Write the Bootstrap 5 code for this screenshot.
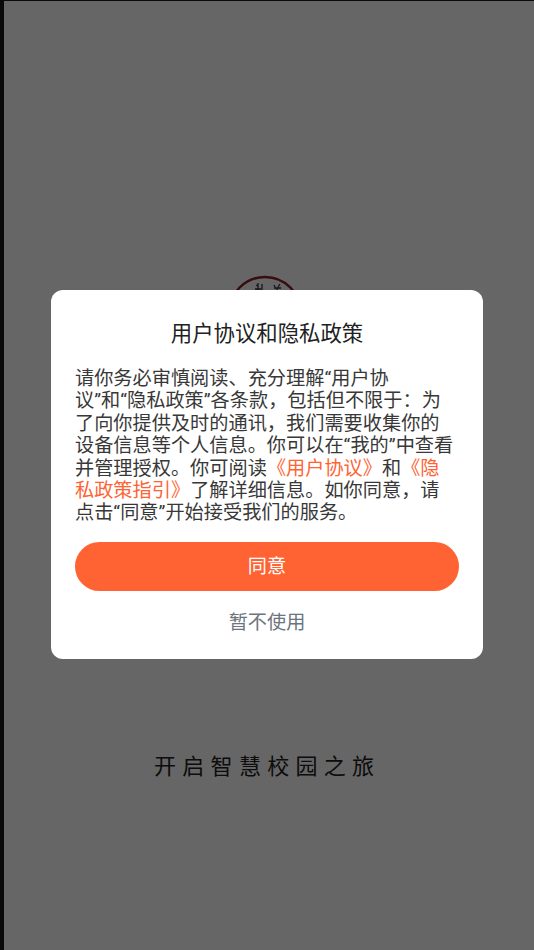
<!DOCTYPE html>
<html lang="zh-CN">
<head>
<meta charset="utf-8">
<title>用户协议和隐私政策</title>
<link rel="stylesheet" href="https://cdn.jsdelivr.net/npm/bootstrap@5.3.0/dist/css/bootstrap.min.css">
<style>
html,body{height:100%;margin:0}
body{background:#000;font-family:Roboto,"Noto Sans CJK SC",sans-serif}
.screen-frame{height:950px;padding:1px 0 0 4px;background:#0a0a0a}
.splash-area{position:relative;height:100%;background:#fff}
.logo-seal{position:absolute;left:221px;top:272px}
.slogan-text{position:absolute;left:150px;top:752px;font-size:22px;line-height:28px;letter-spacing:6.3px;color:#222;white-space:nowrap}
.scrim-layer{position:fixed;left:4px;top:1px;right:0;bottom:0;background:rgba(0,0,0,.6);padding:289px 51px 0 46.5px}
.agree-dialog{height:369px;border-radius:12px;background:#fff;padding:29px 24px 0 24.5px;border:0}
.agree-title{font-size:21.4px;line-height:30px;color:#212121;text-align:center;margin:0 0 19px;font-weight:400;white-space:nowrap}
.agree-copy{font-size:19.2px;line-height:22.4px;color:#383838;margin:0 0 17px;white-space:nowrap}
.agree-copy a{color:#ff6333;text-decoration:none}
.btn-consent{display:block;width:100%;height:49px;border-radius:24.5px;background:#ff6333;border:0;color:#fff;font-size:19.2px;line-height:49px;padding:0}
.btn-decline{display:block;width:100%;height:49px;margin-top:7px;background:none;border:0;color:#6c757d;font-size:19.2px;line-height:49px;padding:0}
</style>
</head>
<body>
<div class="screen-frame">
  <div class="splash-area">
    <svg class="logo-seal" width="80" height="40" viewBox="0 0 80 40" aria-hidden="true">
      <circle cx="40" cy="40" r="36" fill="#fff" stroke="#8c1f2a" stroke-width="2.4"/>
      <path d="M31 12l2 1M33 10v7M30 16h6M37 11v6M49 12l1 2M55 11l-2 3M49 15h7M52 15v3" fill="none" stroke="#333" stroke-width="1.3"/>
    </svg>
    <div class="slogan-text">开启智慧校园之旅</div>
  </div>
</div>
<div class="scrim-layer">
  <div class="agree-dialog card">
    <h1 class="agree-title">用户协议和隐私政策</h1>
    <p class="agree-copy">请你务必审慎阅读、充分理解“用户协<br>议”和“隐私政策”各条款，包括但不限于：为<br>了向你提供及时的通讯，我们需要收集你的<br>设备信息等个人信息。你可以在“我的”中查看<br>并管理授权。你可阅读<a href="#">《用户协议》</a>和<a href="#">《隐<br>私政策指引》</a>了解详细信息。如你同意，请<br>点击“同意”开始接受我们的服务。</p>
    <button type="button" class="btn btn-consent">同意</button>
    <button type="button" class="btn btn-decline">暂不使用</button>
  </div>
</div>
<script src="https://cdn.jsdelivr.net/npm/bootstrap@5.3.0/dist/js/bootstrap.bundle.min.js"></script>
</body>
</html>
